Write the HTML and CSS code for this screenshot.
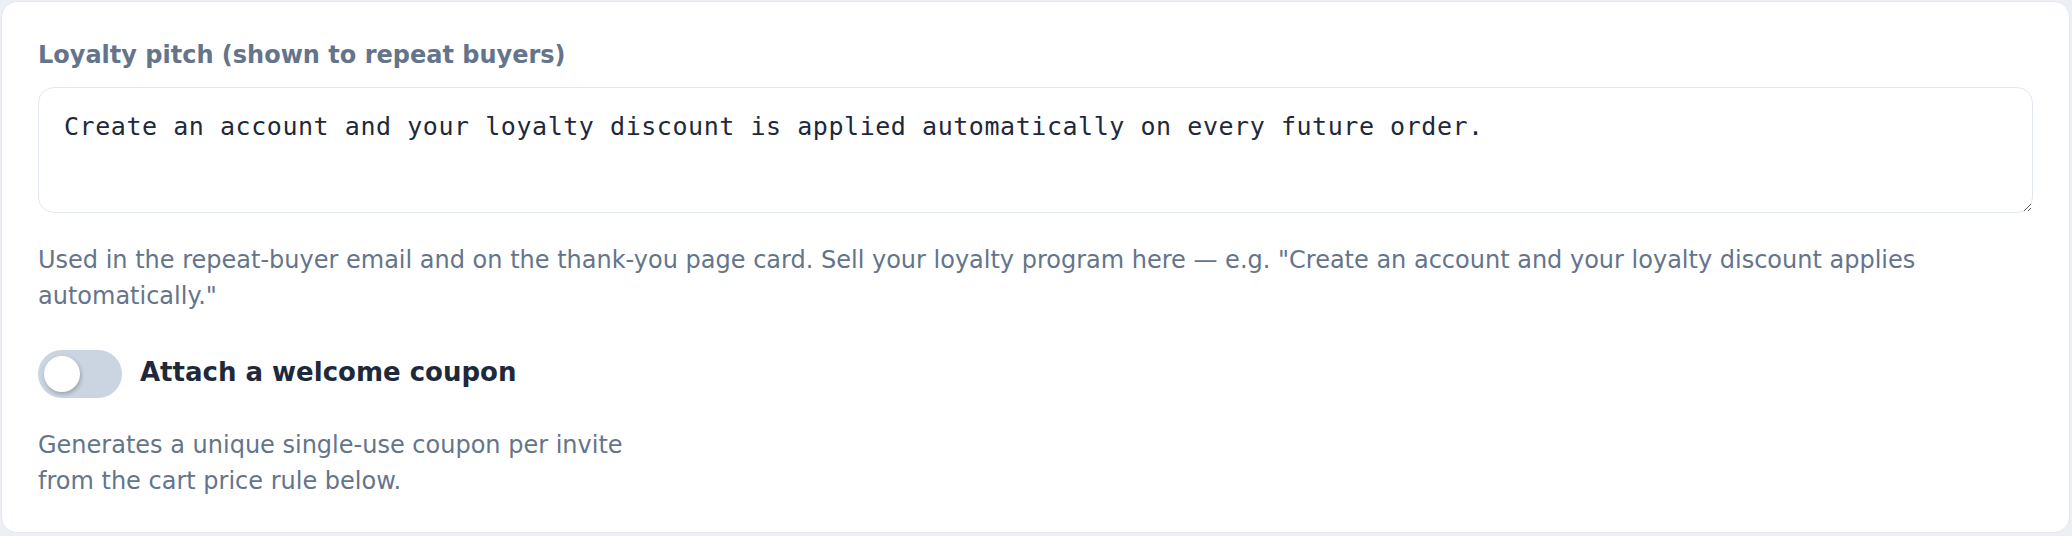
FILE: index.html
```html
<!DOCTYPE html>
<html lang="en">
<head>
<meta charset="utf-8">
<title>Loyalty pitch</title>
<link rel="stylesheet" href="styles.css">
</head>
<body>
<div class="card">
  <label class="field-label" for="pitch">Loyalty pitch (shown to repeat buyers)</label>
  <textarea id="pitch" class="pitch">Create an account and your loyalty discount is applied automatically on every future order.</textarea>
  <p class="help">Used in the repeat-buyer email and on the thank-you page card. Sell your loyalty program here — e.g. "Create an account and your loyalty discount applies automatically."</p>
  <div class="toggle-row">
    <span class="toggle"><span class="knob"></span></span>
    <span class="toggle-label">Attach a welcome coupon</span>
  </div>
  <p class="help narrow">Generates a unique single-use coupon per invite from the cart price rule below.</p>
</div>
</body>
</html>
```
FILE: styles.css
```css
html, body {
  margin: 0;
  padding: 0;
}
body {
  background: #eceff4;
  height: 536px;
  padding: 1px 2px 0 1px;
  box-sizing: border-box;
  font-family: "DejaVu Sans", sans-serif;
}
.card {
  background: #ffffff;
  border: 1px solid #e4e8ee;
  border-radius: 16px;
  height: 532px;
  box-sizing: border-box;
  padding: 39px 36px 0 36px;
}
.field-label {
  display: block;
  font-weight: bold;
  font-size: 24px;
  line-height: 28px;
  color: #64748b;
  margin-bottom: 18px;
}
.pitch {
  display: block;
  width: 100%;
  height: 126px;
  box-sizing: border-box;
  border: 1px solid #e2e8f0;
  border-radius: 16px;
  padding: 21px 25px;
  font-family: "DejaVu Sans Mono", monospace;
  font-size: 25px;
  letter-spacing: 0.55px;
  line-height: 36px;
  color: #1e293b;
  background: #fff;
  resize: vertical;
  outline: none;
  margin: 0;
}
.help {
  margin: 29px 0 0 0;
  font-size: 24px;
  line-height: 36px;
  color: #64748b;
}
.narrow {
  max-width: 610px;
}
.toggle-row {
  display: flex;
  align-items: center;
  gap: 18px;
  margin-top: 36px;
}
.toggle {
  display: flex;
  align-items: center;
  width: 84px;
  height: 48px;
  box-sizing: border-box;
  padding: 0 6px;
  border-radius: 24px;
  background: #cbd5e1;
}
.knob {
  width: 36px;
  height: 36px;
  border-radius: 50%;
  background: #fff;
  box-shadow: 1px 2px 4px rgba(15, 23, 42, 0.28);
}
.toggle-label {
  font-size: 26px;
  font-weight: bold;
  color: #1e293b;
  line-height: 30px;
  padding-bottom: 4px;
}
```
